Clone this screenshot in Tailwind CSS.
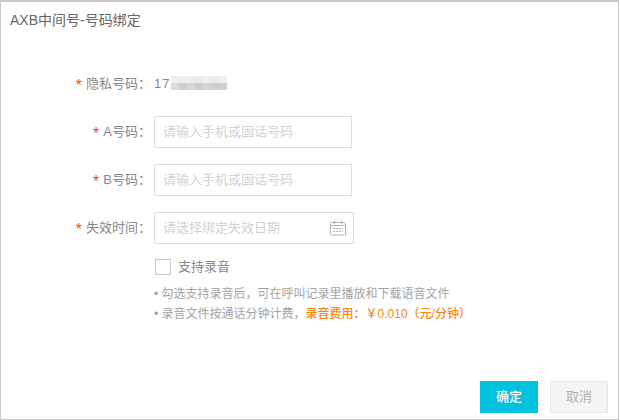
<!DOCTYPE html>
<html lang="zh-CN">
<head>
<meta charset="UTF-8" />
<title>AXB中间号-号码绑定</title>
<script src="https://cdn.jsdelivr.net/npm/@tailwindcss/browser@4"></script>
</head>
<body class="bg-white">
<div class="w-[619px] h-[420px] flex flex-col border border-t-2 border-[#c8c8c8] bg-white font-['Liberation_Sans','Noto_Sans_CJK_SC',sans-serif] text-[13px] text-[#888] overflow-hidden">
  <!-- 标题 -->
  <h1 class="pl-[9px] pt-[8px] h-[30px] text-[14px] leading-[20px] font-normal text-[#666]">AXB中间号-号码绑定</h1>

  <!-- 表单 -->
  <div class="flex flex-col pt-[36px]">
    <div class="flex items-center h-[32px]">
      <label class="w-[150px] flex justify-end items-center"><span class="text-[#ea4f22] text-[16px] leading-none mt-[3px] mr-[4px]">*</span>隐私号码：</label>
      <div class="ml-[3px] flex items-center">
        <span class="tracking-[1px]">17</span>
        <span class="ml-[1px] flex flex-col w-[56px] h-[14px] -mt-[3px]">
          <span class="h-[7px] flex">
            <span class="w-[8px] bg-[#eeefef]"></span>
            <span class="w-[8px] bg-[#ebecec]"></span>
            <span class="w-[8px] bg-[#eceded]"></span>
            <span class="w-[8px] bg-[#e9eaea]"></span>
            <span class="w-[8px] bg-[#edeeee]"></span>
            <span class="w-[8px] bg-[#eaebeb]"></span>
            <span class="w-[8px] bg-[#eeefef]"></span>
          </span>
          <span class="h-[7px] flex">
            <span class="w-[8px] bg-[#dcdcdd]"></span>
            <span class="w-[8px] bg-[#cfcfd0]"></span>
            <span class="w-[8px] bg-[#d6d6d7]"></span>
            <span class="w-[8px] bg-[#cdcdce]"></span>
            <span class="w-[8px] bg-[#d4d4d5]"></span>
            <span class="w-[8px] bg-[#cfcfd0]"></span>
            <span class="w-[8px] bg-[#d0d0d1]"></span>
          </span>
        </span>
      </div>
    </div>

    <div class="flex items-center h-[32px] mt-[16px]">
      <label class="w-[150px] flex justify-end items-center"><span class="text-[#ea4f22] text-[16px] leading-none mt-[3px] mr-[4px]">*</span>A号码：</label>
      <div class="ml-[3px] w-[198px] h-[32px] border border-[#dcdcdc] flex items-center pl-[8px] text-[#d2d2d2]">请输入手机或固话号码</div>
    </div>

    <div class="flex items-center h-[32px] mt-[16px]">
      <label class="w-[150px] flex justify-end items-center"><span class="text-[#ea4f22] text-[16px] leading-none mt-[3px] mr-[4px]">*</span>B号码：</label>
      <div class="ml-[3px] w-[198px] h-[32px] border border-[#dcdcdc] flex items-center pl-[8px] text-[#d2d2d2]">请输入手机或固话号码</div>
    </div>

    <div class="flex items-center h-[32px] mt-[16px]">
      <label class="w-[150px] flex justify-end items-center"><span class="text-[#ea4f22] text-[16px] leading-none mt-[3px] mr-[4px]">*</span>失效时间：</label>
      <div class="ml-[3px] w-[200px] h-[32px] border border-[#dcdcdc] flex items-center justify-between pl-[8px] pr-[7px] text-[#d2d2d2]">
        <span>请选择绑定失效日期</span>
        <svg width="16" height="16" viewBox="0 0 16 16" fill="none" stroke="#b4b4b4" stroke-width="1">
          <rect x="0.5" y="2.5" width="15" height="12.5" rx="1" />
          <path d="M4.5 0.5v3.5M11.5 0.5v3.5M0.5 5.5h15" />
          <path d="M3 8.5h10M3 11.5h10" stroke-dasharray="2 1" />
        </svg>
      </div>
    </div>

    <div class="flex items-center ml-[154px] mt-[15px] h-[16px]">
      <span class="w-[16px] h-[16px] border border-[#c8c8c8] bg-white"></span>
      <span class="ml-[7px]">支持录音</span>
    </div>

    <ul class="ml-[153px] mt-[9px] text-[#a3a3a3] text-[12px]">
      <li class="h-[20px] leading-[20px]">• 勾选支持录音后，可在呼叫记录里播放和下载语音文件</li>
      <li class="h-[20px] leading-[20px]">• 录音文件按通话分钟计费，<span class="text-[#ff8410] font-medium">录音费用：￥0.010（元/分钟）</span></li>
    </ul>
  </div>

  <!-- 按钮 -->
  <div class="mt-auto flex justify-end gap-[12px] pr-[10px] pb-[6px]">
    <button class="w-[58px] h-[32px] bg-[#00c1de] text-white font-medium">确定</button>
    <button class="w-[58px] h-[32px] bg-[#f4f4f4] border border-[#e6e6e6] text-[#b0b0b0]">取消</button>
  </div>
</div>
</body>
</html>
